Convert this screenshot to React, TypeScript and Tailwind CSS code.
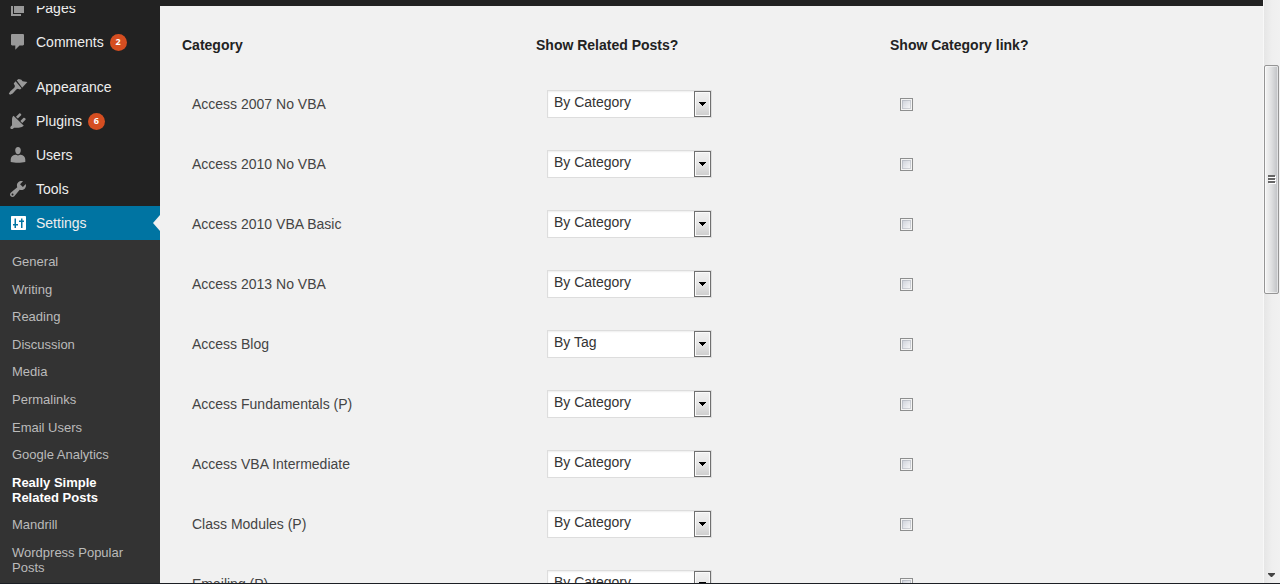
import type { ReactNode } from "react";

type MenuItem = { label: string; icon: ReactNode; badge?: number; current?: boolean };

const icons = {
  pages: <path d="M6 15V2h10v13H6zm-1 1h8v2H3V5h2v11z" />,
  comments: (
    <path d="M4.200 2h10.600c.7 0 1.200.5 1.200 1.200v9c0 .7-.5 1.200-1.200 1.200H11.500L7.300 17.800v-4.400H4.200c-.7 0-1.200-.5-1.200-1.200v-9C3 2.500 3.500 2 4.200 2z" />
  ),
  appearance: (
    <path d="M8.700 3.300 10.700 2l2.700.8 1.200 1.500 4.800.7-5.200 5.800zM7.600 4.300l5.900 7-1.500 1.200-2.300-.8-1.400.7-3.600 4.100-2.600 1.300L.8 16.700l1.500-2.500 4-3.500.7-1.600-1.300-2.700z" />
  ),
  plugins: (
    <path d="M13.110 4.360L9.870 7.600 8 5.730l3.240-3.240c.35-.34 1.050-.2 1.560.32.520.51.66 1.210.31 1.550zm-8.300 1.200l.71-.85 10.310 10-1.190.84c-.71.71-2.630 1.160-3.820 1.160H6.140L4.900 17.660c-.59.59-1.540.59-2.120 0-.59-.58-.59-1.530 0-2.120l1.240-1.240v-4.880c0-1.130.1-3.190.79-3.860zm7.560 4.540l3.240-3.240c.34-.35 1.040-.21 1.550.31.52.51.66 1.210.31 1.550l-3.240 3.250z" />
  ),
  users: (
    <path d="M10 2c1.800 0 2.800 1.300 2.800 3.200S11.700 9.300 10 9.300 7.200 7.100 7.200 5.200 8.200 2 10 2zM2.700 17v-2.500c0-2.500 2-4.500 4.500-4.700h.8l2 .8 2-.8h.8c2.500.2 4.500 2.200 4.500 4.700V17c-4 1.100-10.600 1.100-14.600 0z" />
  ),
  tools: (
    <path d="M16.68 9.770c-1.340 1.340-3.300 1.670-4.950.99l-5.410 6.520c-.99.99-2.590.99-3.580 0s-.99-2.590 0-3.570l6.520-5.420c-.68-1.650-.35-3.610.99-4.950 1.280-1.280 3.120-1.620 4.720-1.060l-2.890 2.890 2.820 2.820 2.860-2.870c.53 1.580.18 3.390-1.080 4.650zM3.810 16.210c.4.39 1.040.39 1.430 0 .4-.4.4-1.040 0-1.430-.39-.4-1.030-.4-1.430 0-.39.39-.39 1.030 0 1.430z" />
  ),
  settings: (
    <path
      fillRule="evenodd"
      d="M4 3h13c.6 0 1 .4 1 1v12c0 .6-.4 1-1 1H4c-.6 0-1-.4-1-1V4c0-.6.4-1 1-1zM6.500 5.500V11H5v1.500h1.500V15H8v-2.500h2V11H8V5.500zM13 5.500v2h-2V9h2v6h1.500V9H16V7.500h-1.500v-2z"
    />
  ),
};

const contentMenu: MenuItem[] = [
  { label: "Pages", icon: icons.pages },
  { label: "Comments", icon: icons.comments, badge: 2 },
];

const adminMenu: MenuItem[] = [
  { label: "Appearance", icon: icons.appearance },
  { label: "Plugins", icon: icons.plugins, badge: 6 },
  { label: "Users", icon: icons.users },
  { label: "Tools", icon: icons.tools },
  { label: "Settings", icon: icons.settings, current: true },
];

const settingsMenu = [
  "General",
  "Writing",
  "Reading",
  "Discussion",
  "Media",
  "Permalinks",
  "Email Users",
  "Google Analytics",
  "Really Simple Related Posts",
  "Mandrill",
  "Wordpress Popular Posts",
];

const categories = [
  { name: "Access 2007 No VBA", mode: "By Category" },
  { name: "Access 2010 No VBA", mode: "By Category" },
  { name: "Access 2010 VBA Basic", mode: "By Category" },
  { name: "Access 2013 No VBA", mode: "By Category" },
  { name: "Access Blog", mode: "By Tag" },
  { name: "Access Fundamentals (P)", mode: "By Category" },
  { name: "Access VBA Intermediate", mode: "By Category" },
  { name: "Class Modules (P)", mode: "By Category" },
  { name: "Emailing (P)", mode: "By Category" },
];

function MenuList({ items }: { items: MenuItem[] }) {
  return (
    <ul>
      {items.map((item) => (
        <li key={item.label}>
          <a
            href="#"
            className={`relative flex h-[34px] items-center pl-2 text-sm text-[#eee] ${
              item.current ? "bg-[#0074a2]" : ""
            }`}
          >
            <svg
              viewBox="0 0 20 20"
              aria-hidden="true"
              className={`size-5 shrink-0 ${item.current ? "fill-white" : "fill-[#999]"}`}
            >
              {item.icon}
            </svg>
            <span className="pl-2">{item.label}</span>
            {item.badge && (
              <span className="ml-1.5 flex size-[17px] items-center justify-center rounded-full bg-[#d54e21] font-['Open_Sans',sans-serif] text-[9px] font-bold text-white">
                {item.badge}
              </span>
            )}
            {item.current && (
              <svg
                viewBox="0 0 7 16"
                aria-hidden="true"
                className="absolute right-0 h-4 w-[7px] fill-[#f1f1f1]"
              >
                <path d="M7 0v16L0 8z" />
              </svg>
            )}
          </a>
        </li>
      ))}
    </ul>
  );
}

function Sidebar() {
  return (
    <nav aria-label="Admin menu" className="w-40 shrink-0 bg-[#222]">
      <div className="-mt-[15px] flex flex-col gap-[11px]">
        <MenuList items={contentMenu} />
        <MenuList items={adminMenu} />
      </div>
      <div className="bg-[#333] py-2">
        <ul className="flex h-[333px] flex-col justify-between">
          {settingsMenu.map((label) => (
            <li key={label}>
              <a
                href="#"
                className={`block py-1.5 pr-5 pl-3 text-[13px] leading-[15px] ${
                  label === "Really Simple Related Posts" ? "font-bold text-white" : "text-[#bbb]"
                }`}
              >
                {label}
              </a>
            </li>
          ))}
        </ul>
      </div>
    </nav>
  );
}

function ModeSelect({ name, mode }: { name: string; mode: string }) {
  return (
    <div className="relative m-px h-7 w-[165px]">
      <select
        aria-label={`Show related posts for ${name}`}
        defaultValue={mode}
        className="block size-full appearance-none border border-[#ddd] bg-white pb-1 pl-1.5 text-sm leading-5 text-[#333] shadow-[inset_0_1px_2px_rgba(0,0,0,0.07)]"
      >
        <option>By Category</option>
        <option>By Tag</option>
      </select>
      <span className="pointer-events-none absolute inset-y-px right-px flex w-[17px] items-center justify-center border border-[#707070] bg-linear-to-b from-[#f2f2f2] via-[#e6e6e6] to-[#cdcdcd] shadow-[inset_0_0_0_1px_#fafafa]">
        <svg viewBox="0 0 7 4" aria-hidden="true" className="h-1 w-[7px] fill-black">
          <path d="M0 0h7v1H6v1H5v1H4v1H3V3H2V2H1V1H0z" />
        </svg>
      </span>
    </div>
  );
}

function CategoryTable() {
  return (
    <table className="w-full table-fixed text-left text-sm text-[#444]">
      <thead>
        <tr className="h-[58px] font-bold text-[#222]">
          <th scope="col">Category</th>
          <th scope="col">Show Related Posts?</th>
          <th scope="col">Show Category link?</th>
        </tr>
      </thead>
      <tbody>
        {categories.map(({ name, mode }) => (
          <tr key={name} className="h-[60px]">
            <td className="px-2.5">{name}</td>
            <td className="px-2.5">
              <ModeSelect name={name} mode={mode} />
            </td>
            <td className="px-2.5">
              <input
                type="checkbox"
                aria-label={`Show category link for ${name}`}
                className="block size-[13px] appearance-none border border-[#8e8f8f] bg-linear-to-br from-[#c8ccd6] to-white shadow-[inset_0_0_0_1px_#f4f4f4,inset_0_0_0_2px_rgba(150,155,165,0.4)] checked:from-[#4b6a9b] checked:to-[#4b6a9b]"
              />
            </td>
          </tr>
        ))}
      </tbody>
    </table>
  );
}

function ScrollRail() {
  return (
    <div
      aria-hidden="true"
      className="flex w-[17px] shrink-0 flex-col border-l border-[#f8f8f8] bg-linear-to-r from-[#e6e6e6] via-[#efefef] to-[#f1f1f1] pr-px"
    >
      <div className="h-[65px]" />
      <div className="flex h-[229px] items-center justify-center rounded-xs border border-[#959595] bg-linear-to-r from-[#f5f5f5] via-[#dedfe0] to-[#bfc1c4] shadow-[inset_0_0_0_1px_rgba(255,255,255,0.5)]">
        <svg viewBox="0 0 8 9" className="h-[9px] w-2">
          <path d="M1 1h7v2H1zM1 4h7v2H1zM1 7h7v2H1z" fill="#fff" />
          <path d="M0 0h7v2H0zM0 3h7v2H0zM0 6h7v2H0z" fill="#666" />
        </svg>
      </div>
      <div className="flex flex-1 items-end justify-center pb-1.5">
        <svg viewBox="0 0 7 4" className="h-1 w-[7px] fill-[#444]">
          <path d="M0 0h7v1L4 4H3L0 1z" />
        </svg>
      </div>
    </div>
  );
}

export default function App() {
  return (
    <div className="flex h-screen flex-col overflow-hidden bg-[#f1f1f1] font-['Liberation_Sans',Arial,sans-serif]">
      <div className="flex min-h-0 flex-1">
        <div className="flex min-w-0 flex-1 flex-col">
          <header className="h-1.5 shrink-0 bg-[#222]" />
          <div className="flex min-h-0 flex-1 overflow-hidden">
            <Sidebar />
            <main className="min-w-0 flex-1 pt-2.5 pr-[19px] pl-[22px]">
              <CategoryTable />
            </main>
          </div>
        </div>
        <ScrollRail />
      </div>
      <footer className="h-px shrink-0 bg-[#1c1f24]" />
    </div>
  );
}
